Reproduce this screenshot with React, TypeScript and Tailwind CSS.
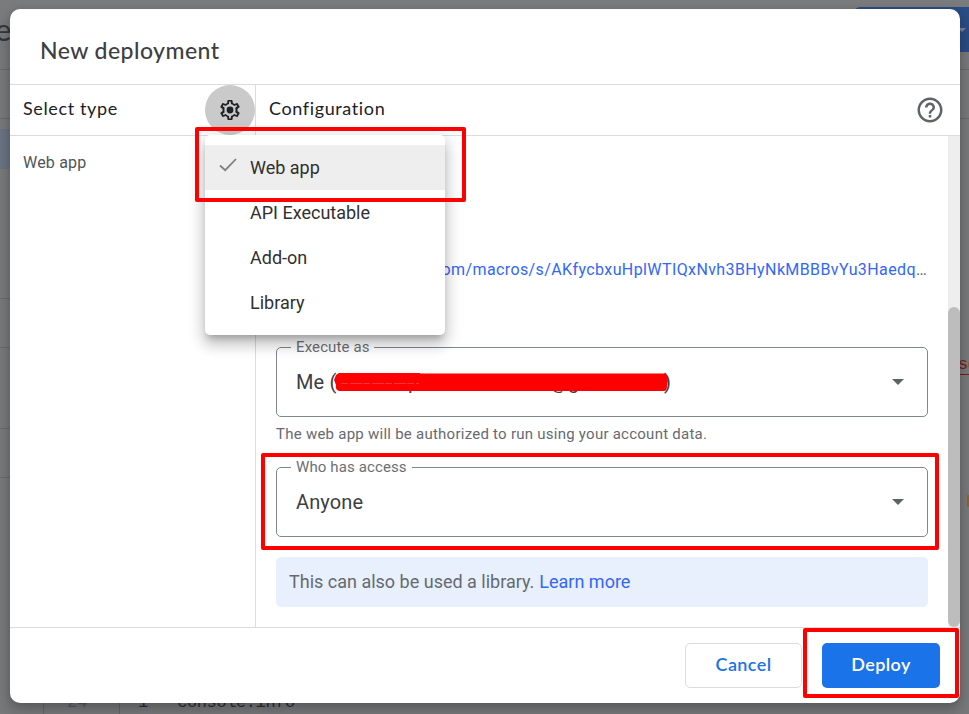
import { ReactNode } from "react";

const brand = "font-['Lato','Open_Sans',sans-serif]";

function EditorBackdrop() {
  return (
    <div className="flex h-full w-full justify-between bg-[#7a7b7d] font-['Liberation_Mono',monospace]">
      <div className="flex w-[300px] flex-col overflow-hidden">
        <div className="relative h-[69px] font-['Lato',sans-serif]">
          <span className="absolute -left-[5px] top-[9px] text-[31px] leading-10 text-[#35373a]">e</span>
        </div>
        <div className="h-[50px] border-y border-[#6a6b6d] pl-[9px] leading-[46px] text-[#303134]">-</div>
        <div className="mt-[10px] h-10 bg-[#6b7584]" />
        <div className="mt-[129px] h-[50px] border-y border-[#6a6b6d] pl-[9px] text-[#303134] leading-[46px]">-</div>
        <div className="mt-20 h-[50px] border-y border-[#6a6b6d] pl-[9px] text-[#303134] leading-[46px]">-</div>
        <div className="grow" />
        <div className="flex h-[27px] items-start text-[17px] leading-[31px]">
          <div className="ml-[43px] w-[77px] border-x border-[#67686a] pl-[23px] text-[#58595b]">24</div>
          <div className="pl-[18px] text-[#2f3033]">1</div>
          <div className="pl-[29px] text-[#2f3033] tracking-[-0.4px]">console.info</div>
        </div>
      </div>
      <div className="flex w-[120px] flex-col overflow-hidden">
        <div className="ml-[5px] mt-[7px] flex h-[45px] w-[130px] items-center justify-end rounded-md bg-[#2b4d86]">
          <span className="mb-[-2px] mr-[18px] mt-[-2px] h-0 w-0 border-x-[4px] border-t-[4px] border-x-transparent border-t-[#77869f]" />
        </div>
        <div className="mt-[17px] h-[50px] border-y border-[#6a6b6d]" />
        <div className="mt-[234px] ml-[109px] h-[22px] border-b border-[#7d1f1b] text-[17px] leading-[24px] text-[#7d1f1b]">
          s<span className="-ml-px text-[#996515]">c</span>
        </div>
        <div className="mt-[120px] ml-[118px] h-3 w-1 bg-[#94661e]" />
      </div>
    </div>
  );
}

function SelectField({ label, notch, children }: { label: string; notch: string; children: ReactNode }) {
  return (
    <div className="relative flex h-[70px] items-center justify-between rounded-[5px] border border-[#80868b] pl-[19px] pr-[23px]">
      <span className={`absolute -top-[11px] left-[14px] h-5 whitespace-nowrap bg-white pl-[5px] text-[15px] leading-5 tracking-[0.12px] text-[#6b6f74] ${notch}`}>
        {label}
      </span>
      <div className="text-[20px] leading-7 tracking-[0.12px] text-[#3c4043]">{children}</div>
      <span className="h-0 w-0 border-x-[6px] border-t-[6px] border-x-transparent border-t-[#5f6368]" />
    </div>
  );
}

function MenuItem({ label, selected }: { label: string; selected?: boolean }) {
  return (
    <div className={`flex h-[45px] items-center ${selected ? "bg-[#eeeeee]" : ""}`}>
      <div className="flex w-[45px] justify-center">
        {selected && (
          <svg className="-mt-[5px] h-[14px] w-[18px]" viewBox="0 0 18 14" fill="none" stroke="#808080" strokeWidth="1.8">
            <path d="M1 7.5 L6.2 12.2 L17 1" />
          </svg>
        )}
      </div>
      <span className="text-[18px] leading-6 text-[#303030]">{label}</span>
    </div>
  );
}

export default function App() {
  return (
    <div className="relative h-[714px] w-[969px] overflow-hidden font-['Roboto',sans-serif]">
      <EditorBackdrop />
      <div className="absolute left-[10px] top-[9px] flex h-[694px] w-[950px] flex-col overflow-hidden rounded-[10px] bg-white shadow-[0_12px_19px_4px_rgba(0,0,0,0.12),0_3px_10px_rgba(0,0,0,0.2)]">
        <header className={`flex h-[76px] shrink-0 items-center border-b border-[#dadce0] pl-[30px] pt-[8px] text-[23px] font-medium tracking-[0.45px] text-[#3c4043] ${brand}`}>
          New deployment
        </header>
        <div className={`flex h-[51px] shrink-0 border-b border-[#dadce0] text-[18px] font-normal text-[#202124] ${brand}`}>
          <div className="flex w-[246px] items-center justify-between border-r border-[#dadce0] pl-[13px]">
            <span className="pb-[3px] tracking-[0.62px]">Select type</span>
            <span className="flex h-[50px] w-[50px] items-center justify-center rounded-full bg-[#cacaca]">
              <svg className="h-6 w-6" viewBox="0 0 24 24" fill="#202124">
                <path d="M19.43 12.98c.04-.32.07-.64.07-.98 0-.34-.03-.66-.07-.98l2.11-1.65c.19-.15.24-.42.12-.64l-2-3.46a.5.5 0 0 0-.61-.22l-2.49 1c-.52-.4-1.08-.73-1.69-.98l-.38-2.65A.488.488 0 0 0 14 2h-4c-.25 0-.46.18-.49.42l-.38 2.65c-.61.25-1.17.59-1.69.98l-2.49-1a.5.5 0 0 0-.61.22l-2 3.46c-.13.22-.07.49.12.64l2.11 1.65c-.04.32-.07.65-.07.98s.03.66.07.98l-2.11 1.65c-.19.15-.24.42-.12.64l2 3.46c.12.22.39.3.61.22l2.49-1c.52.4 1.08.73 1.69.98l.38 2.65c.03.24.24.42.49.42h4c.25 0 .46-.18.49-.42l.38-2.65c.61-.25 1.17-.59 1.69-.98l2.49 1c.23.09.49 0 .61-.22l2-3.46c.12-.22.07-.49-.12-.64l-2.11-1.65zM17.5 12c0 .4-.03.73-.08 1.13l-.14 1.13.89.7 1.08.84-.7 1.21-1.27-.51-1.04-.42-.9.68c-.43.32-.84.56-1.25.73l-1.06.43-.16 1.13-.2 1.35h-1.4l-.19-1.35-.16-1.13-1.06-.43c-.43-.18-.83-.41-1.23-.71l-.91-.7-1.06.43-1.27.51-.7-1.21 1.08-.84.89-.7-.14-1.13c-.05-.41-.08-.75-.08-1.14s.03-.73.08-1.13l.14-1.13-.89-.7-1.08-.84.7-1.21 1.27.51 1.04.42.9-.68c.43-.32.84-.56 1.25-.73l1.06-.43.16-1.13.2-1.35h1.39l.19 1.35.16 1.13 1.06.43c.43.18.83.41 1.23.71l.91.7 1.06-.43 1.27-.51.7 1.21-1.07.85-.89.7.14 1.13c.05.39.08.72.08 1.12z" />
                <circle cx="12" cy="12" r="3.4" />
              </svg>
            </span>
          </div>
          <div className="flex grow items-center justify-between pl-[13px] pr-[15px]">
            <span className="pb-[3px] tracking-[0.62px]">Configuration</span>
            <svg className="h-[30px] w-[30px]" viewBox="0 0 24 24" fill="#5f6368">
              <path d="M11 18h2v-2h-2v2zm1-16C6.48 2 2 6.48 2 12s4.48 10 10 10 10-4.48 10-10S17.52 2 12 2zm0 18c-4.41 0-8-3.59-8-8s3.59-8 8-8 8 3.59 8 8-3.59 8-8 8zm0-14c-2.21 0-4 1.79-4 4h2c0-1.1.9-2 2-2s2 .9 2 2c0 2-3 1.75-3 5h2c0-2.25 3-2.5 3-5 0-2.21-1.79-4-4-4z" />
            </svg>
          </div>
        </div>
        <main className="flex h-[492px] shrink-0 border-b border-[#dadce0]">
          <aside className="w-[246px] shrink-0 border-r border-[#dadce0] pl-[13px] pt-[15px] text-[16px] leading-6 tracking-[0.2px] text-[#505458]">
            Web app
          </aside>
          <section className="flex w-[692px] flex-col pl-5 pr-5 pt-[122px]">
            <div className="flex h-6 justify-end overflow-hidden whitespace-nowrap pr-[1px] text-[16px] leading-6 tracking-[0.39px] text-[#3367f6]">
              com/macros/s/AKfycbxuHplWTIQxNvh3BHyNkMBBBvYu3Haedq<span className="text-[#5f6368]">…</span>
            </div>
            <div className="mt-[65px]">
              <SelectField label="Execute as" notch="w-[83px]">
                <div className="relative w-[380px] whitespace-nowrap">
                  Me (
                  <span className="absolute left-[112px] top-0">p</span>
                  <span className="absolute left-[254px] top-0">@g</span>
                  <span className="absolute left-[368px] top-0">)</span>
                  <svg className="absolute left-[38px] top-[5px] h-[19px] w-[336px]" viewBox="0 0 336 19" fill="#ff0000">
                    <path d="M5 0H86V.5H331Q333 1 333 4L334 7 333 13Q333 18 330 18H5Q1 17 2 12L0 7 2 2Z" />
                    <path d="M7 10.5H85" stroke="#ff5555" strokeWidth=".6" strokeDasharray="7 2 12 1" />
                  </svg>
                </div>
              </SelectField>
            </div>
            <p className="mt-[7px] h-5 whitespace-nowrap text-[15px] leading-5 tracking-[0.25px] text-[#666a6f]">
              The web app will be authorized to run using your account data.
            </p>
            <div className="mt-[23px]">
              <SelectField label="Who has access" notch="w-[121px]">Anyone</SelectField>
            </div>
            <div className="mt-5 flex h-[50px] items-center gap-[5px] whitespace-nowrap rounded-[5px] bg-[#e8f0fe] pb-[2px] pl-[13px] text-[18px] text-[#666a6f]">
              <span>This can also be used a library.</span>
              <span className="text-[#3367f6]">Learn more</span>
            </div>
          </section>
          <div className="w-3 shrink-0 bg-[#eeeeee] pt-[171px]">
            <div className="h-[320px] rounded-full bg-[#bdbdbd]" />
          </div>
        </main>
        <footer className={`flex grow items-center justify-end gap-5 pr-5 text-[18px] font-semibold tracking-[0.4px] ${brand}`}>
          <button className="h-[45px] w-[117px] rounded-[5px] border border-[#dadce0] pb-0.5 text-[#1a73e8]">Cancel</button>
          <button className="h-[45px] w-[118px] rounded-[5px] bg-[#1a73e8] pb-0.5 text-white">Deploy</button>
        </footer>
      </div>
      <div className="absolute left-[205px] top-[135px] h-[200px] w-[240px] rounded-[5px] bg-white py-[10px] shadow-[0_6px_6px_-3px_rgba(0,0,0,0.2),0_10px_13px_1px_rgba(0,0,0,0.14),0_4px_18px_3px_rgba(0,0,0,0.12)]">
        <MenuItem label="Web app" selected />
        <MenuItem label="API Executable" />
        <MenuItem label="Add-on" />
        <MenuItem label="Library" />
      </div>
      <div className="absolute left-[195px] top-[127px] h-[75px] w-[271px] rounded-[2px] border-4 border-[#ff0000]" />
      <div className="absolute left-[261px] top-[453px] h-[97px] w-[678px] rounded-[2px] border-4 border-[#ff0000]" />
      <div className="absolute left-[803px] top-[628px] h-[70px] w-[156px] rounded-[2px] border-4 border-[#ff0000]" />
    </div>
  );
}
